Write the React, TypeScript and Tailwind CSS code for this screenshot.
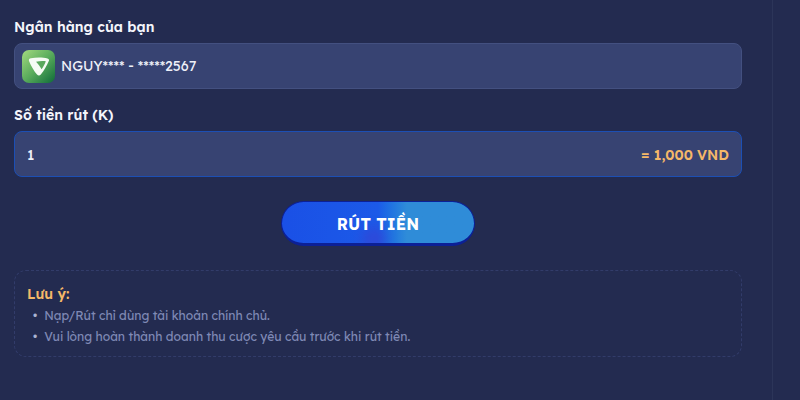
const font = { fontFamily: '"Lexend", Inter, "Noto Sans", sans-serif' };

function BankLogo() {
  return (
    <svg width="33" height="33" viewBox="0 0 33 33" className="shrink-0">
      <defs>
        <linearGradient id="logo" x1="0" y1="0" x2="1" y2="1">
          <stop offset="0" stopColor="#a4da80" />
          <stop offset="0.5" stopColor="#5aac5c" />
          <stop offset="1" stopColor="#0f6b39" />
        </linearGradient>
      </defs>
      <rect width="33" height="33" rx="7" fill="url(#logo)" />
      <path
        d="M7 11 C6.4 9.4 7.5 8.4 9 8.2 C14 7.4 21 7.4 25.5 8.4 C27 8.8 27.4 9.8 26.8 11 C24.8 15.8 22 20.5 18.8 24.6 C17.6 26 16.2 25.8 15 24.6 C12 21 9 16 7 11 Z"
        fill="#f6fbf4"
      />
      <path d="M14 11.8 C17 11 21 11 23.8 11.2 C22.8 14.2 21.2 17 19.6 19.2 C18 16.6 16.2 13.8 14 11.8 Z" fill="#5aa85c" />
    </svg>
  );
}

export default function App() {
  return (
    <div className="w-[800px] h-[400px] bg-[#232b50] overflow-hidden" style={font}>
      <div className="w-[773px] h-[400px] border-r border-[#2c3559] pl-[14px] pr-[30px] pt-[18px]">
        {/* Ngan hang */}
        <div className="text-[14.1px] leading-[18px] font-semibold text-[#f4f5fb]">Ngân hàng của bạn</div>
        <div className="mt-[7px] h-[46px] flex items-center gap-[6px] pl-[7px] rounded-lg bg-[#374372] border border-[#435080]">
          <BankLogo />
          <span className="pt-[2px] text-[14.1px] text-[#eef0f8]">NGUY**** - *****2567</span>
        </div>

        {/* So tien */}
        <div className="mt-[17px] text-[14.1px] leading-[18px] font-semibold text-[#f4f5fb]">Số tiền rút (K)</div>
        <div className="mt-[7px] h-[46px] flex items-center justify-between pl-[12px] pr-[12px] pt-[2px] rounded-lg bg-[#374372] border border-[#1c4fb4]">
          <span className="text-[14px] font-medium text-[#eef0f8]">1</span>
          <span className="text-[14px] font-semibold text-[#f5b868]">= 1,000 VND</span>
        </div>

        <div className="mt-[24px] flex justify-center">
          <button className="relative overflow-hidden w-[194px] h-[45px] pt-[3px] rounded-full bg-gradient-to-r from-[#1a50e6] via-[#1c5ae8] via-50% to-[#2f8cd8] to-65% border border-[#0c2096] border-b-[3px] text-white text-[16px] font-bold tracking-[0.1px]">
            <span className="absolute left-[80px] bottom-[-8px] w-[24px] h-[24px] rounded-full bg-[#3a3fd0] opacity-60 blur-[6px]" />
            <span className="relative">RÚT TIỀN</span>
          </button>
        </div>

        {/* Luu y */}
        <div className="mt-[24px] h-[87px] rounded-xl border border-dashed border-[#323c6a] px-[12px] pt-[13px]">
          <div className="text-[14px] leading-[20px] font-semibold text-[#f5b868]">Lưu ý:</div>
          <ul className="mt-[1px] text-[12.13px] leading-[21px] text-[#7f89b5]">
            <li className="flex gap-[7px] pl-[6px]"><span className="text-[#aab3d2]">•</span>Nạp/Rút chỉ dùng tài khoản chính chủ.</li>
            <li className="flex gap-[7px] pl-[6px]"><span className="text-[#aab3d2]">•</span>Vui lòng hoàn thành doanh thu cược yêu cầu trước khi rút tiền.</li>
          </ul>
        </div>
      </div>
    </div>
  );
}
